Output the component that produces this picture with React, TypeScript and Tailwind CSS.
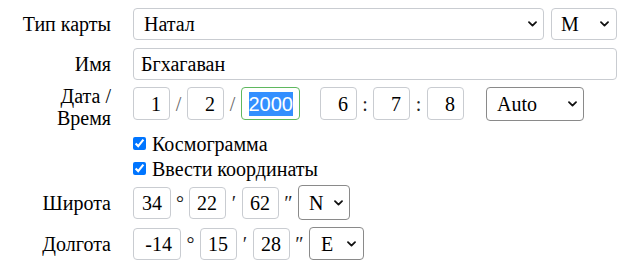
import React from "react";

const Chevron = () => (
  <svg width="9" height="6" viewBox="0 0 9 6" className="shrink-0">
    <path d="M1 1.2 L4.5 4.6 L8 1.2" fill="none" stroke="#111" strokeWidth="1.8" strokeLinecap="round" strokeLinejoin="round" />
  </svg>
);

function Select({
  value,
  w,
  h = "h-[32px]",
  dark,
  pl = "pl-[10px]",
  pr = "pr-[6px]",
}: {
  value: string;
  w: string;
  h?: string;
  dark?: boolean;
  pl?: string;
  pr?: string;
}) {
  return (
    <div
      className={`${w} ${h} ${pl} ${pr} flex items-center justify-between rounded-[4px] border bg-white ${
        dark ? "border-[#8a8a8a]" : "border-[#c9ccd1]"
      }`}
    >
      <span>{value}</span>
      <Chevron />
    </div>
  );
}

function Num({ value, w = "w-[37px]", h = "h-[32px]" }: { value: string; w?: string; h?: string }) {
  return (
    <div className={`${w} ${h} flex items-center justify-end pr-[8px] rounded-[4px] border border-[#c9ccd1] bg-white`}>
      {value}
    </div>
  );
}

const Sep = ({ c, w, light }: { c: string; w: string; light?: boolean }) => (
  <span className={`${w} text-center ${light ? "text-[#666]" : "text-[#222]"}`}>{c}</span>
);

export default function App() {
  return (
    <div className="w-[624px] h-[271px] bg-white pt-[8px] pr-[7px] font-['Liberation_Serif','DejaVu_Serif',serif] text-[20px] leading-[22px] text-black">
      {/* тип карты */}
      <div className="flex items-center h-[32px]">
        <div className="w-[111px] text-right">Тип карты</div>
        <div className="ml-[22px] flex gap-[7px]">
          <Select value="Натал" w="w-[411px]" />
          <Select value="M" w="w-[66px]" pl="pl-[9px]" pr="pr-[7px]" />
        </div>
      </div>

      {/* имя */}
      <div className="flex items-center h-[32px] mt-[8px]">
        <div className="w-[111px] text-right">Имя</div>
        <div className="ml-[22px] w-[484px] h-[32px] flex items-center pl-[7px] rounded-[4px] border border-[#c9ccd1]">
          Бгхагаван
        </div>
      </div>

      {/* дата / время */}
      <div className="flex items-start h-[33px] mt-[7px]">
        <div className="w-[111px] text-right -mt-[2px]">
          Дата /
          <br />
          Время
        </div>
        <div className="ml-[22px] flex items-center h-[33px]">
          <Num value="1" h="h-[33px]" />
          <Sep c="/" w="w-[17px]" light />
          <Num value="2" h="h-[33px]" />
          <Sep c="/" w="w-[17px]" light />
          <div className="w-[59px] h-[33px] flex items-center justify-end pr-[6px] rounded-[4px] border border-[#5fb85f] bg-white">
            <span className="bg-[#338fff] text-white font-['Liberation_Sans',sans-serif] leading-[24px]">2000</span>
          </div>
          <div className="w-[20px]" />
          <Num value="6" h="h-[33px]" />
          <Sep c=":" w="w-[16px]" />
          <Num value="7" h="h-[33px]" />
          <Sep c=":" w="w-[17px]" />
          <Num value="8" h="h-[33px]" />
          <div className="w-[22px]" />
          <Select value="Auto" w="w-[98px]" h="h-[34px]" dark pr="pr-[6px]" />
        </div>
      </div>

      {/* флажки */}
      <div className="mt-[11px] pl-[133px]">
        <label className="flex items-center h-[25px] gap-[6px]">
          <input type="checkbox" defaultChecked className="w-[13px] h-[13px] m-0 accent-[#0075ff]" />
          <span>Космограмма</span>
        </label>
        <label className="flex items-center h-[25px] gap-[6px]">
          <input type="checkbox" defaultChecked className="w-[13px] h-[13px] m-0 accent-[#0075ff]" />
          <span>Ввести координаты</span>
        </label>
      </div>

      {/* широта */}
      <div className="flex items-center h-[33px] mt-[5px]">
        <div className="w-[111px] text-right">Широта</div>
        <div className="ml-[22px] flex items-center">
          <Num value="34" w="w-[38px]" />
          <Sep c="°" w="w-[18px]" />
          <Num value="22" />
          <Sep c="′" w="w-[16px]" />
          <Num value="62" />
          <Sep c="″" w="w-[19px]" />
          <Select value="N" w="w-[52px]" h="h-[35px]" dark pr="pr-[6px]" />
        </div>
      </div>

      {/* долгота */}
      <div className="flex items-center h-[33px] mt-[8px]">
        <div className="w-[111px] text-right">Долгота</div>
        <div className="ml-[22px] flex items-center">
          <Num value="-14" w="w-[48px]" />
          <Sep c="°" w="w-[19px]" />
          <Num value="15" />
          <Sep c="′" w="w-[16px]" />
          <Num value="28" />
          <Sep c="″" w="w-[19px]" />
          <Select value="E" w="w-[55px]" h="h-[33px]" dark pl="pl-[11px]" pr="pr-[7px]" />
        </div>
      </div>
    </div>
  );
}
